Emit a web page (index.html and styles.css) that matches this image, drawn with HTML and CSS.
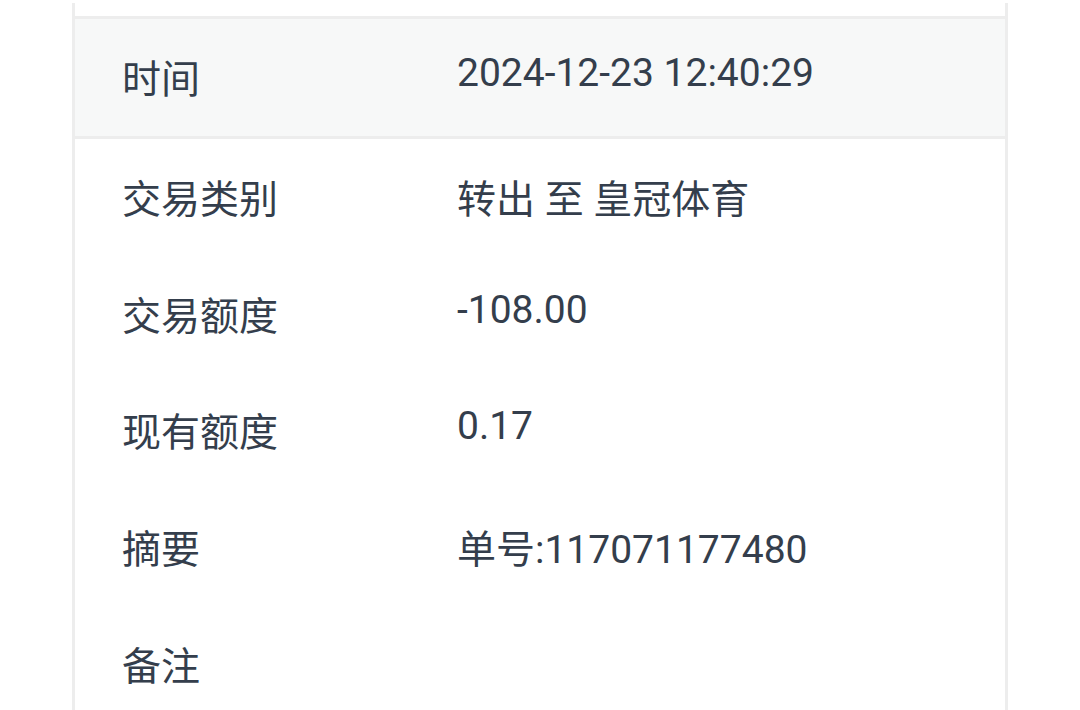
FILE: index.html
```html
<!DOCTYPE html>
<html lang="zh-CN">
<head>
<meta charset="utf-8">
<title>交易详情</title>
<link rel="stylesheet" href="styles.css">
</head>
<body>
<div class="card">
  <div class="lead"></div>
  <div class="row row-head">
    <div class="label">时间</div>
    <div class="value num">2024-12-23 12:40:29</div>
  </div>
  <div class="row">
    <div class="label">交易类别</div>
    <div class="value">转出 至 皇冠体育</div>
  </div>
  <div class="row">
    <div class="label">交易额度</div>
    <div class="value num">-108.00</div>
  </div>
  <div class="row">
    <div class="label">现有额度</div>
    <div class="value num">0.17</div>
  </div>
  <div class="row">
    <div class="label">摘要</div>
    <div class="value">单号:117071177480</div>
  </div>
  <div class="row">
    <div class="label">备注</div>
    <div class="value"></div>
  </div>
</div>
</body>
</html>
```

FILE: styles.css
```css
html, body {
  margin: 0;
  padding: 0;
  background: #ffffff;
}

body {
  height: 710px;
  overflow: hidden;
  font-family: Roboto, "Noto Sans CJK SC", sans-serif;
  color: #343e4c;
}

.card {
  margin: 3px 0 0 72px;
  width: 936px;
  box-sizing: border-box;
  border-left: 3px solid #ededed;
  border-right: 3px solid #ededed;
}

.lead {
  height: 13px;
}

.row {
  display: flex;
  align-items: flex-start;
  height: 116.75px;
  box-sizing: border-box;
  padding-top: 39px;
}

.row-head {
  background: #f7f8f8;
  border-top: 3px solid #ededed;
  border-bottom: 3px solid #ededed;
  height: 122.75px;
}

.label,
.value {
  font-size: 39px;
  line-height: 45px;
  white-space: nowrap;
}

.label {
  flex: 0 0 382px;
  box-sizing: border-box;
  padding-left: 47px;
}

.value {
  flex: 1 1 auto;
}

.value.num {
  margin-top: -7px;
}
```
